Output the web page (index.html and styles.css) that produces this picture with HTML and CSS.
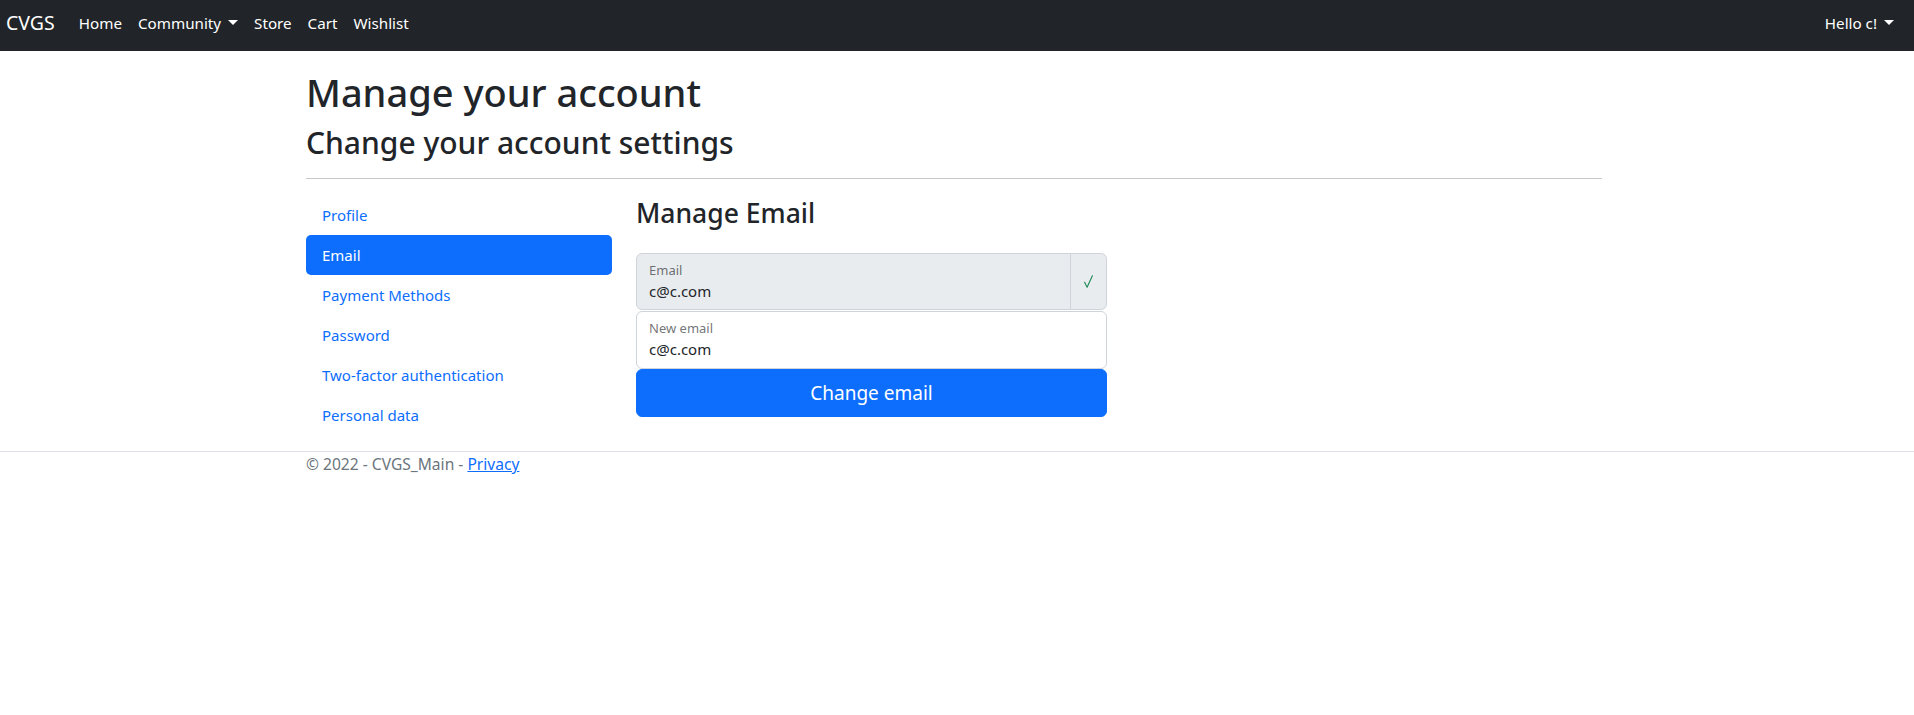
FILE: index.html
```html
<!DOCTYPE html>
<html lang="en">
<head>
<meta charset="utf-8">
<title>Manage Email - CVGS_Main</title>
<link rel="stylesheet" href="styles.css">
</head>
<body>
<header>
  <nav class="navbar">
    <div class="nav-left">
      <a class="brand" href="#">CVGS</a>
      <ul class="nav-links">
        <li><a class="nav-link" href="#">Home</a></li>
        <li><a class="nav-link dropdown" href="#">Community</a></li>
        <li><a class="nav-link" href="#">Store</a></li>
        <li><a class="nav-link" href="#">Cart</a></li>
        <li><a class="nav-link" href="#">Wishlist</a></li>
      </ul>
    </div>
    <ul class="nav-links">
      <li><a class="nav-link dropdown" href="#">Hello c!</a></li>
    </ul>
  </nav>
</header>
<div class="container">
  <main class="main">
    <h1 class="title">Manage your account</h1>
    <h2 class="subtitle">Change your account settings</h2>
    <hr class="divider">
    <div class="manage-row">
      <ul class="pills">
        <li><a class="pill" href="#">Profile</a></li>
        <li><a class="pill active" href="#">Email</a></li>
        <li><a class="pill" href="#">Payment Methods</a></li>
        <li><a class="pill" href="#">Password</a></li>
        <li><a class="pill" href="#">Two-factor authentication</a></li>
        <li><a class="pill" href="#">Personal data</a></li>
      </ul>
      <section class="content">
        <h3 class="section-title">Manage Email</h3>
        <form class="email-form">
          <div class="input-group">
            <div class="field field-disabled field-start">
              <label class="field-label">Email</label>
              <input class="field-input" type="text" value="c@c.com" disabled>
            </div>
            <span class="addon">
              <svg width="9" height="13" viewBox="0 0 9 13" aria-hidden="true"><path d="M0.6 7.2 L3.1 12.2 L8.4 0.8" fill="none" stroke="#198754" stroke-width="1.1" stroke-linecap="round" stroke-linejoin="round"/></svg>
            </span>
          </div>
          <div class="field field-tall">
            <label class="field-label">New email</label>
            <input class="field-input" type="email" value="c@c.com">
          </div>
          <button class="btn-primary" type="button">Change email</button>
        </form>
      </section>
    </div>
  </main>
</div>
<footer class="footer">
  <div class="container">&copy; 2022 - CVGS_Main - <a href="#">Privacy</a></div>
</footer>
</body>
</html>
```

FILE: styles.css
```css
* { box-sizing: border-box; }

html, body {
  margin: 0;
  padding: 0;
}

body {
  font-family: "Segoe UI", "Noto Sans", "Open Sans", Arial, sans-serif;
  font-size: 16px;
  line-height: 1.5;
  color: #212529;
  background: #fff;
}

a { color: #0d6efd; text-decoration: none; }

ul { list-style: none; margin: 0; padding: 0; }

/* Navbar */
.navbar {
  height: 51px;
  background: #212529;
  display: flex;
  align-items: center;
  justify-content: space-between;
  padding: 0 12px 5px 6px;
}

.nav-left {
  display: flex;
  align-items: center;
}

.brand {
  color: #fff;
  font-size: 19.5px;
  line-height: 30px;
  margin-right: 16px;
}

.nav-links {
  display: flex;
  align-items: center;
}

.nav-link {
  display: block;
  color: #fff;
  padding: 8px;
  font-size: 15.2px;
  line-height: 24px;
}

.dropdown::after {
  content: "";
  display: inline-block;
  margin-left: 7px;
  vertical-align: 0.255em;
  border-top: 5px solid;
  border-right: 5px solid transparent;
  border-left: 5px solid transparent;
}

/* Layout */
.container {
  width: 1326px;
  margin: 0 auto;
  padding: 0 18px 0 12px;
}

.main {
  padding-top: 18px;
  padding-bottom: 16px;
}

.title {
  font-size: 38px;
  font-weight: 500;
  line-height: 46px;
  margin: 0 0 10px;
}

.subtitle {
  font-size: 30px;
  font-weight: 500;
  line-height: 36px;
  margin: 0;
}

.divider {
  border: 0;
  border-top: 1px solid #c8c9ca;
  margin: 17px 0 16px;
}

.manage-row {
  display: grid;
  grid-template-columns: 306px 1fr;
  column-gap: 24px;
}

/* Pills */
.pill {
  display: block;
  padding: 8px 16px;
  line-height: 24px;
  border-radius: 5px;
  color: #0d6efd;
  font-size: 15px;
}

.pill.active {
  background: #0d6efd;
  color: #fff;
}

/* Content */
.section-title {
  font-size: 26.5px;
  font-weight: 500;
  line-height: 32px;
  margin: 2px 0 24px;
}

.email-form {
  width: 471px;
  display: flex;
  flex-direction: column;
}

.input-group {
  display: flex;
  margin-bottom: 1px;
}

.field {
  display: flex;
  flex-direction: column;
  height: 57px;
  padding: 8px 12px;
  border: 1px solid #ced4da;
  border-radius: 6px;
  background: #fff;
}

.field-tall { height: 58px; }

.input-group .field { flex: 1; }

.field-start {
  border-top-right-radius: 0;
  border-bottom-right-radius: 0;
}

.field-disabled { background: #e9ecef; }

.field-label {
  font-size: 13px;
  line-height: 17px;
  color: rgba(33, 37, 41, 0.65);
}

.field-input {
  font: inherit;
  font-size: 15px;
  line-height: 24px;
  height: 24px;
  padding: 0;
  border: 0;
  background: transparent;
  color: #212529;
  -webkit-text-fill-color: #212529;
  outline: none;
}

.addon {
  display: flex;
  align-items: center;
  justify-content: center;
  width: 37px;
  margin-left: -1px;
  background: #e9ecef;
  border: 1px solid #ced4da;
  border-radius: 0 6px 6px 0;
}

.btn-primary {
  height: 48px;
  border: 1px solid #0d6efd;
  border-radius: 6px;
  background: #0d6efd;
  color: #fff;
  font: inherit;
  font-size: 19px;
  line-height: 30px;
  cursor: pointer;
}

/* Footer */
.footer {
  border-top: 1px solid #dee2e6;
  color: #6c757d;
  line-height: 24px;
  font-size: 15.6px;
}

.footer a {
  color: #0d6efd;
  text-decoration: underline;
}
```
